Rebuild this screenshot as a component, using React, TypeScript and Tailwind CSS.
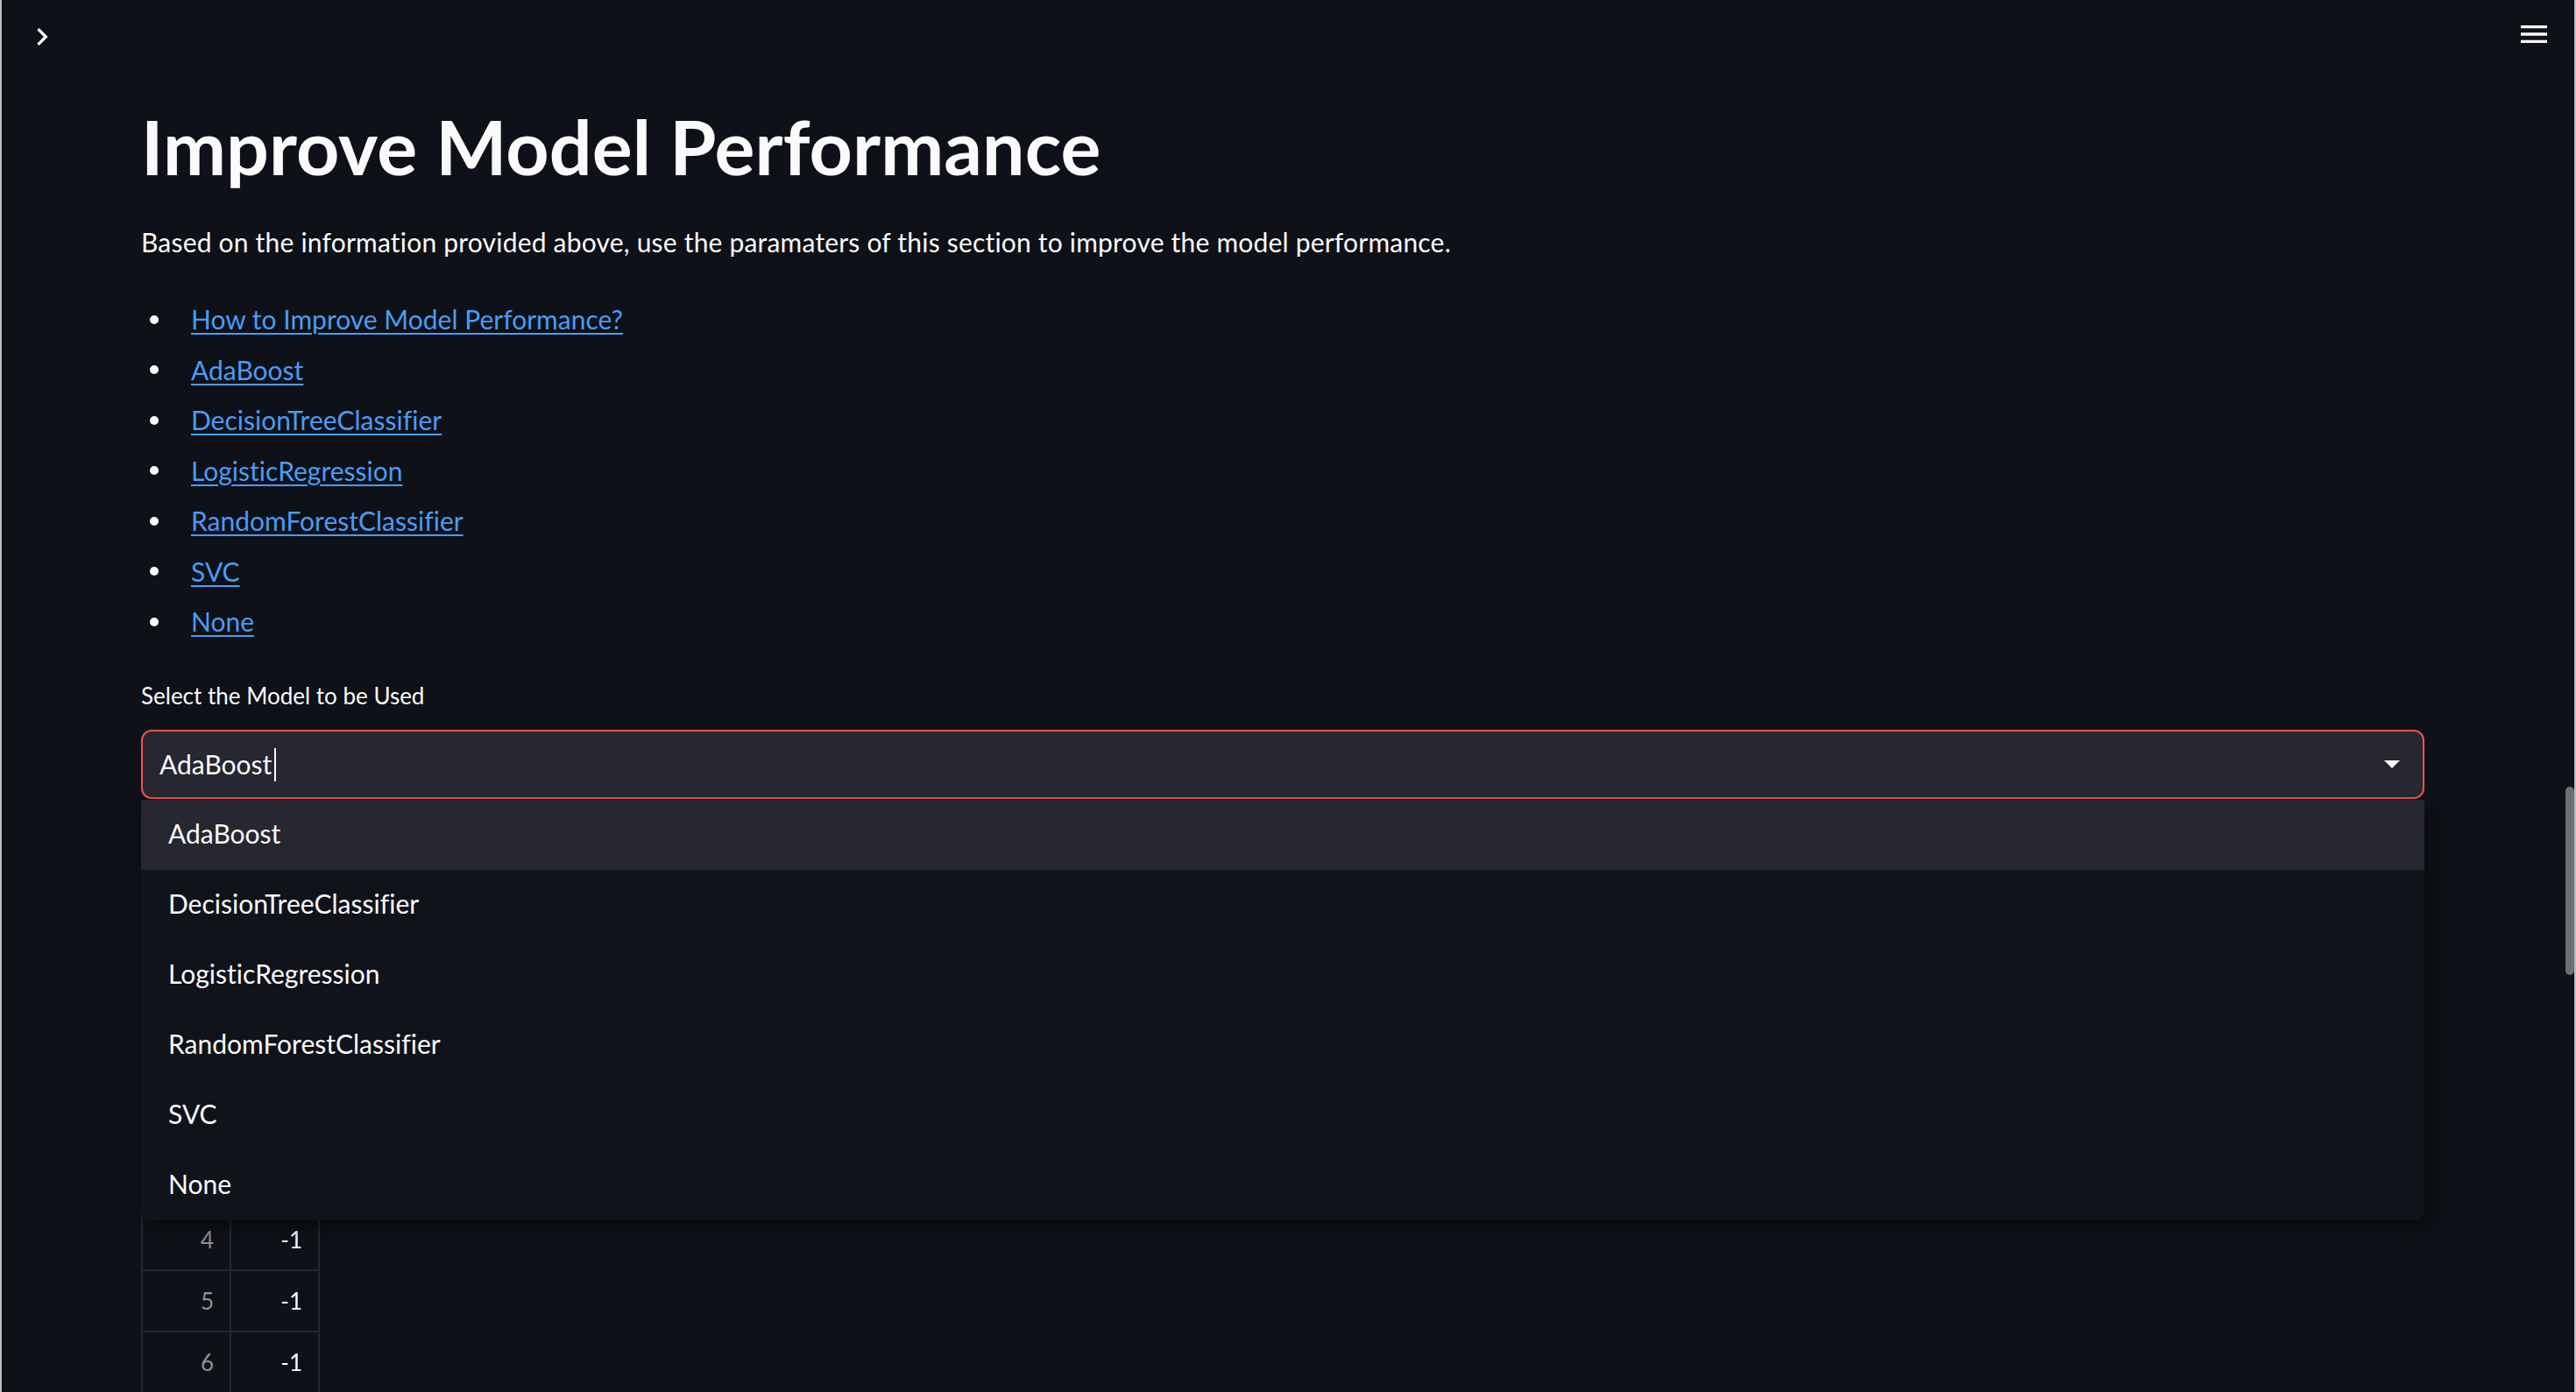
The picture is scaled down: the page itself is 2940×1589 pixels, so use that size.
import React from "react";

const links = [
    "How to Improve Model Performance?",
    "AdaBoost",
    "DecisionTreeClassifier",
    "LogisticRegression",
    "RandomForestClassifier",
    "SVC",
    "None",
];

const models = [
    "AdaBoost",
    "DecisionTreeClassifier",
    "LogisticRegression",
    "RandomForestClassifier",
    "SVC",
    "None",
];

// rows 0-3 sit behind the open dropdown, only 4-6 show
const rows = [0, 1, 2, 3, 4, 5, 6];

function ChevronIcon(): JSX.Element {
    return (
        <svg viewBox="0 0 24 24" className="w-[40px] h-[40px] fill-[#fafafa]">
            <path d="M10 6 8.59 7.41 13.17 12l-4.58 4.59L10 18l6-6z" />
        </svg>
    );
}

function MenuIcon(): JSX.Element {
    return (
        <svg viewBox="0 0 24 24" className="w-[40px] h-[40px] fill-[#fafafa]">
            <path d="M3 18h18v-2H3v2zm0-5h18v-2H3v2zm0-7v2h18V6H3z" />
        </svg>
    );
}

function ModelSelect(): JSX.Element {
    return (
        <div className="relative mt-[19px]">
            <div className="flex items-center h-[79px] rounded-[12px] border-2 border-[#f0534f] bg-[#262730] pl-[19px] pr-[26px]">
                <span className="text-[30px] text-[#fafafa]">AdaBoost</span>
                <span className="ml-[3px] w-[2px] h-[38px] bg-[#fafafa]" />
                <div className="flex-1" />
                <svg viewBox="0 0 18 9" className="w-[18px] h-[9px] fill-[#fafafa]">
                    <path d="M0 0h18L9 9z" />
                </svg>
            </div>
            {/* open dropdown list, lies over the table */}
            <ul className="absolute left-0 right-0 top-full mt-px z-10 bg-[#11131a] rounded-b-[10px] shadow-[6px_8px_18px_rgba(0,0,0,0.45)] overflow-hidden">
                {models.map((m, i) => (
                    <li
                        key={m}
                        className={
                            "flex items-center h-[80px] pl-[31px] pb-[3px] text-[30px] text-[#fafafa] " +
                            (i === 0 ? "bg-[#262730]" : "")
                        }
                    >
                        {m}
                    </li>
                ))}
            </ul>
        </div>
    );
}

function DataTable(): JSX.Element {
    return (
        <div className="mt-[119px] w-[204px] border-l-2 border-[#25272e]">
            <div className="flex h-[70px] border-b-2 border-[#25272e]">
                <div className="w-[102px] border-r-2 border-[#25272e]" />
                <div className="w-[102px] border-r-2 border-[#25272e]" />
            </div>
            {rows.map((r) => (
                <div
                    key={r}
                    className="flex h-[70px] border-b-2 border-[#25272e] text-[26px]"
                >
                    <div className="w-[102px] flex items-center justify-end pr-[18px] border-r-2 border-[#25272e] text-[#8e9097]">
                        {r > 3 ? r : ""}
                    </div>
                    <div className="w-[102px] flex items-center justify-end pr-[18px] border-r-2 border-[#25272e] text-[#fafafa]">
                        {r > 3 ? "-1" : ""}
                    </div>
                </div>
            ))}
        </div>
    );
}

export default function App(): JSX.Element {
    return (
        <div
            className="relative h-[1589px] overflow-hidden bg-[#0e1117] border-x-2 border-[#bcbcbe] text-[#fafafa] [font-variant-ligatures:none]"
            style={{ fontFamily: "Lato, 'Noto Sans', sans-serif" }}
        >
            <header className="flex justify-between items-start h-[80px] px-[26px] pt-[20px]">
                <div className="mt-[2px]">
                    <ChevronIcon />
                </div>
                <div className="-mt-px">
                    <MenuIcon />
                </div>
            </header>

            <main className="pl-[159px] pr-[171px] pt-[38px]">
                <h1 className="text-[86px] leading-[98px] font-bold tracking-[0.1px]">
                    Improve Model Performance
                </h1>
                <p className="mt-[36px] text-[30px] leading-[48px] tracking-[0.2px]">
                    Based on the information provided above, use the paramaters of
                    this section to improve the model performance.
                </p>
                <ul className="mt-[36px]">
                    {links.map((l) => (
                        <li
                            key={l}
                            className="flex items-center h-[57.5px] text-[30px] leading-[57.5px]"
                        >
                            <span className="ml-[10px] w-[10px] h-[10px] rounded-full bg-[#fafafa]" />
                            <a
                                href="#"
                                className="ml-[37px] text-[#4a9cf6] underline decoration-2 underline-offset-[4px]"
                            >
                                {l}
                            </a>
                        </li>
                    ))}
                </ul>
                <label className="block mt-[35.5px] text-[26px] leading-[40px]">
                    Select the Model to be Used
                </label>
                <ModelSelect />
                <DataTable />
            </main>

            {/* page scrollbar */}
            <div className="absolute right-0 top-[898px] w-[10px] h-[215px] rounded-full bg-[#6e6f74]" />
        </div>
    );
}
